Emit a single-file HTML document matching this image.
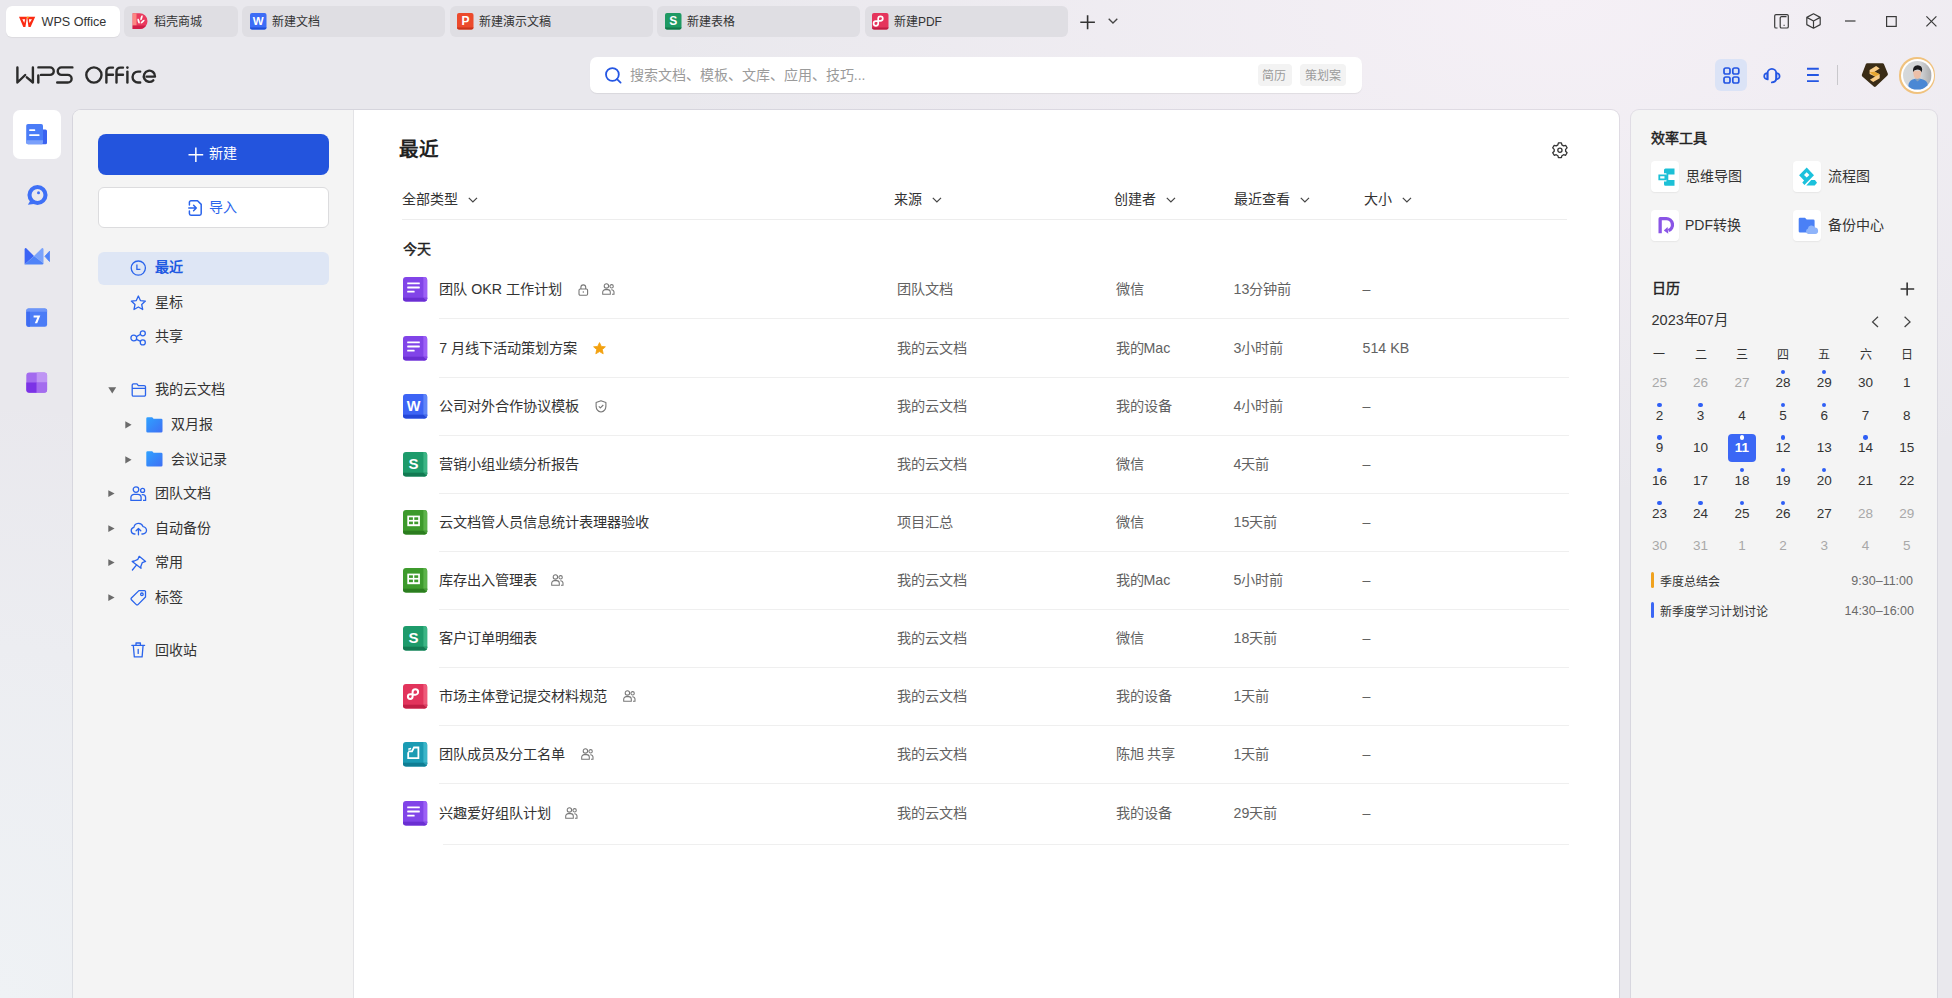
<!DOCTYPE html>
<html lang="zh-CN">
<head>
<meta charset="utf-8">
<style>
*{box-sizing:border-box;margin:0;padding:0}
html,body{width:1952px;height:998px;overflow:hidden}
body{position:relative;font-family:"Liberation Sans",sans-serif;color:#333;background:radial-gradient(ellipse 900px 500px at 1550px 0px,rgba(245,240,246,1) 0%,rgba(245,240,246,0) 100%),radial-gradient(ellipse 500px 600px at 0px 998px,rgba(239,242,245,1) 0%,rgba(239,242,245,.6) 50%,rgba(239,242,245,0) 100%),#e9e8ed}
.a{position:absolute}
.t{position:absolute;white-space:nowrap;line-height:1}
svg{position:absolute;overflow:visible}
/* tabs */
.tab{position:absolute;top:6px;height:30.5px;border-radius:6px;background:#dfdee3}
.tab.on{background:#fff;box-shadow:0 0.5px 1px rgba(0,0,0,.06)}
.tab .t{top:8.5px;font-size:12px;color:#333}
/* panel */
#panel{position:absolute;left:72.5px;top:109.5px;width:1546.5px;height:1000px;border-radius:8px;background:#fff;box-shadow:0 0 0 1px rgba(0,0,40,.07),0 0 2px rgba(0,0,0,.04);overflow:hidden}
#nav{position:absolute;left:0;top:0;width:281px;height:100%;background:#f4f4f4;border-right:1px solid #e3e3e6}
#rcard{position:absolute;left:1630.5px;top:109.5px;width:306px;height:1000px;border-radius:8px;background:#f4f4f4;box-shadow:0 0 0 1px rgba(0,0,40,.07)}
</style>
</head>
<body>
<!-- TABS -->
<div class="tab on" style="left:6px;width:114px"></div>
<svg style="left:0;top:0" width="40" height="32" viewBox="0 0 40 32"><path d="M19 16.7 H27 L25.4 27.1 H23.3Z M22.3 19.2 L24.3 23 L25.1 19.2Z" fill="#fb2a12" fill-rule="evenodd"/><path d="M27.1 16.7 H35.2 L30.6 27.1 H28.5Z M28.9 19.2 L29.5 23 L32 19.2Z" fill="#fb2a12" fill-rule="evenodd"/><circle cx="27.8" cy="17.4" r=".9" fill="#f5b51c"/></svg>
<div class="t" style="left:41.5px;top:15.5px;font-size:12.6px;color:#333">WPS Office</div>

<div class="tab" style="left:124px;width:114px"></div>
<div class="tab" style="left:242px;width:203px"></div>
<div class="tab" style="left:449.5px;width:203px"></div>
<div class="tab" style="left:657px;width:203px"></div>
<div class="tab" style="left:864.5px;width:203px"></div>


<!-- tab icons & texts -->
<svg style="left:131.5px;top:12.8px" width="16.5" height="17" viewBox="0 0 16.5 17">
 <path d="M0.6 0.3 H7.6 A7.9 7.9 0 0 1 7.6 16.1 H0.6Z" fill="#ea3a5e"/>
 <rect x="0.6" y="0.3" width="3.9" height="12.3" fill="#fc8782"/>
 <path d="M0.6 12.6 H14.16 A7.9 7.9 0 0 1 7.6 16.1 H0.6Z" fill="#d21e47"/>
 <ellipse cx="6.6" cy="8.1" rx="0.95" ry="2.6" transform="rotate(-18 6.6 8.1)" fill="#fff"/>
 <ellipse cx="9.5" cy="4.7" rx="0.95" ry="2.6" transform="rotate(18 9.5 4.7)" fill="#fff"/>
 <ellipse cx="10.6" cy="8.6" rx="0.95" ry="2.6" transform="rotate(48 10.6 8.6)" fill="#fff"/>
</svg>
<div class="t" style="left:153.9px;top:16.3px;font-size:12px">稻壳商城</div>

<svg style="left:250px;top:13px" width="16.5" height="16.5" viewBox="0 0 16.5 16.5">
 <rect x="0" y="0" width="16.5" height="16.5" rx="2" fill="#3d6df6"/>
 <path d="M0 14.5 H16.5 V14.5 A2 2 0 0 1 14.5 16.5 H2 A2 2 0 0 1 0 14.5Z" fill="#1f4fd8"/>
 <text x="8.25" y="12" font-family="Liberation Sans" font-weight="bold" font-size="11.5" fill="#fff" text-anchor="middle">W</text>
</svg>
<div class="t" style="left:271.8px;top:16.3px;font-size:12px">新建文档</div>

<svg style="left:457.3px;top:13px" width="16.5" height="16.5" viewBox="0 0 16.5 16.5">
 <rect x="0" y="0" width="16.5" height="16.5" rx="2" fill="#ec4a2c"/>
 <path d="M0 14.5 H16.5 A2 2 0 0 1 14.5 16.5 H2 A2 2 0 0 1 0 14.5Z" fill="#c9331a"/>
 <text x="8.4" y="12.2" font-family="Liberation Sans" font-weight="bold" font-size="12" fill="#fff" text-anchor="middle">P</text>
</svg>
<div class="t" style="left:479.3px;top:16.3px;font-size:12px">新建演示文稿</div>

<svg style="left:664.8px;top:12.8px" width="16.5" height="16.5" viewBox="0 0 16.5 16.5">
 <rect x="0" y="0" width="16.5" height="16.5" rx="2" fill="#1f9a64"/>
 <path d="M0 14.5 H16.5 A2 2 0 0 1 14.5 16.5 H2 A2 2 0 0 1 0 14.5Z" fill="#13784a"/>
 <text x="8.25" y="12.2" font-family="Liberation Sans" font-weight="bold" font-size="12" fill="#fff" text-anchor="middle">S</text>
</svg>
<div class="t" style="left:686.6px;top:16.3px;font-size:12px">新建表格</div>

<svg style="left:872px;top:12.8px" width="16.5" height="16.5" viewBox="0 0 16.5 16.5">
 <rect x="0" y="0" width="16.5" height="16.5" rx="2" fill="#e5345c"/>
 <path d="M0 14.5 H16.5 A2 2 0 0 1 14.5 16.5 H2 A2 2 0 0 1 0 14.5Z" fill="#c01c42"/>
 <path d="M6.2 8.2 V5.6 A2.3 2.3 0 1 1 8.5 7.9 H6.2 M6.2 8.2 H3.9 A2.3 2.3 0 1 0 6.2 10.5 Z" fill="none" stroke="#fff" stroke-width="1.7"/>
</svg>
<div class="t" style="left:893.9px;top:16.3px;font-size:12px">新建PDF</div>

<!-- plus / chevron -->
<svg style="left:1080px;top:14.6px" width="15" height="15" viewBox="0 0 15 15"><path d="M7.6 0.2 V14.2 M0.3 7.2 H14.9" stroke="#333" stroke-width="1.6"/></svg>
<svg style="left:1107.5px;top:18px" width="10" height="6" viewBox="0 0 10 6"><path d="M0.7 0.7 L5 5 L9.3 0.7" fill="none" stroke="#444" stroke-width="1.3"/></svg>

<!-- window controls -->
<svg style="left:1774px;top:14px" width="15" height="15" viewBox="0 0 15 15">
 <path d="M3.5 14 H2 A1.3 1.3 0 0 1 0.7 12.7 V1.8 A1.3 1.3 0 0 1 2 0.6 H13 A1.3 1.3 0 0 1 14.3 1.8 V12.7 A1.3 1.3 0 0 1 13 14 H7.5 A1.3 1.3 0 0 1 6.2 12.7 V4 A1.3 1.3 0 0 1 7.5 2.7 H12.5" fill="none" stroke="#3a3a3a" stroke-width="1.2"/>
 <path d="M9.6 11.4 H10.6" stroke="#3a3a3a" stroke-width="1.1"/>
</svg>
<svg style="left:1806.3px;top:13.2px" width="15" height="16" viewBox="0 0 15 16">
 <path d="M7.5 0.8 L14.2 4.4 V11.6 L7.5 15.2 L0.8 11.6 V4.4 Z M0.8 4.4 L7.5 8 L14.2 4.4 M7.5 8 V15.2" fill="none" stroke="#3a3a3a" stroke-width="1.2" stroke-linejoin="round"/>
</svg>
<svg style="left:1845px;top:20px" width="11" height="2" viewBox="0 0 11 2"><path d="M0 1 H10.5" stroke="#3a3a3a" stroke-width="1.2"/></svg>
<svg style="left:1885.5px;top:15.8px" width="11" height="11" viewBox="0 0 11 11"><rect x="0.6" y="0.6" width="9.6" height="9.8" fill="none" stroke="#3a3a3a" stroke-width="1.2"/></svg>
<svg style="left:1926.4px;top:16px" width="11" height="11" viewBox="0 0 11 11"><path d="M0.4 0.4 L10.4 10.4 M10.4 0.4 L0.4 10.4" stroke="#3a3a3a" stroke-width="1.2"/></svg>

<!-- LOGO -->
<svg style="left:0;top:0" width="170" height="100" viewBox="0 0 170 100">
 <g fill="none" stroke="#2b2b2b" stroke-width="2.4" stroke-linecap="round" stroke-linejoin="round">
  <path d="M17.4 67.4 V82.5 L25.2 75"/>
  <path d="M26.8 77.3 L32.9 82.5 V67.4"/>
  <path d="M38.3 82.5 V75.4"/>
  <path d="M38.4 67.4 H50 A3.75 3.75 0 0 1 50 74.9 H41"/>
  <path d="M72.4 67.4 H61.5 A3.75 3.75 0 0 0 61.5 74.9 H67.8 A3.8 3.8 0 0 1 67.8 82.5 H57.2"/>
  <circle cx="93.9" cy="75" r="7.6"/>
  <path d="M106.4 82.5 V71.4 A3.8 3.8 0 0 1 110.2 67.6 H113 M106.4 74.8 H113"/>
  <path d="M116.5 82.5 V71.4 A3.8 3.8 0 0 1 120.3 67.6 H123 M116.5 74.8 H123"/>
  <path d="M127.4 82.5 V71.6"/>
  <path d="M140.2 71.6 H138 A5.45 5.45 0 0 0 138 82.5 H140.2"/>
  <path d="M146.6 76.6 H155 A5.6 5.6 0 1 0 153.3 80.3"/>
 </g>
 <circle cx="127.4" cy="67.6" r="1.3" fill="#2b2b2b"/>
</svg>

<!-- SEARCH -->
<div class="a" style="left:589.8px;top:57px;width:772.4px;height:36.4px;border-radius:7px;background:#fff;box-shadow:0 1px 1px rgba(0,0,0,.07)"></div>
<svg style="left:605px;top:66.5px" width="17" height="17" viewBox="0 0 17 17"><circle cx="7.4" cy="7.5" r="6.4" fill="none" stroke="#2456e3" stroke-width="1.8"/><path d="M12 12.2 L15.6 15.6" stroke="#2456e3" stroke-width="1.8" stroke-linecap="round"/></svg>
<div class="t" style="left:629.8px;top:67.6px;font-size:14px;color:#9b9b9b">搜索文档、模板、文库、应用、技巧...</div>
<div class="a" style="left:1258px;top:64.3px;width:33.6px;height:21.6px;border-radius:4px;background:#f3f3f3"></div>
<div class="a" style="left:1300.3px;top:64.3px;width:45.5px;height:21.6px;border-radius:4px;background:#f3f3f3"></div>
<div class="t" style="left:1262.2px;top:69.5px;font-size:12px;color:#9b9b9b">简历</div>
<div class="t" style="left:1304.6px;top:69.5px;font-size:12px;color:#9b9b9b">策划案</div>

<!-- header right icons -->
<div class="a" style="left:1715.2px;top:59px;width:32px;height:32px;border-radius:6px;background:#dbe3f6"></div>
<svg style="left:1722px;top:66px" width="19" height="19" viewBox="0 0 19 19" fill="none" stroke="#2456e3" stroke-width="1.7">
 <rect x="2" y="2" width="6" height="6" rx="1.8"/><rect x="10.8" y="2" width="6" height="6" rx="1.8"/>
 <rect x="2" y="11" width="6" height="6" rx="1.8"/><rect x="10.8" y="11" width="6" height="6" rx="1.8"/>
</svg>
<svg style="left:1762px;top:67px" width="20" height="18" viewBox="0 0 20 18" fill="none" stroke="#2456e3" stroke-width="1.75" stroke-linecap="round">
 <path d="M5.5 12.2 V6.3 A4.4 4.4 0 0 1 14.3 6.3 V12.2"/>
 <path d="M5.5 6 A3.3 3.15 0 0 0 5.5 12.3Z"/>
 <path d="M14.3 6 A3.3 3.15 0 0 1 14.3 12.3Z"/>
 <path d="M14.3 12.3 Q13.6 15.3 9.8 15.4"/>
</svg>
<svg style="left:1806px;top:67px" width="14" height="16" viewBox="0 0 14 16"><path d="M1 1.8 H12.8 M1 8 H12.8 M1 14.1 H12.8" stroke="#2456e3" stroke-width="1.9"/></svg>
<div class="a" style="left:1837px;top:65.2px;width:1px;height:19.7px;background:#c9c8cc"></div>
<svg style="left:1858px;top:60px" width="34" height="30" viewBox="0 0 34 30">
 <path d="M9.2 3.15 H24.6 Q25.5 3.15 25.9 4 L29.8 13.6 Q30.2 14.6 29.4 15.4 L17.8 26.6 Q16.8 27.5 15.8 26.6 L4.3 16.4 Q3.5 15.6 3.9 14.6 L7.9 4 Q8.3 3.15 9.2 3.15Z" fill="#3a2c16"/>
 <path d="M11.6 10 L18.1 6.1 L21.7 8.5 L16.6 11.7 L21.7 14.3 V18.3 L15.2 22 L11.9 19.8 L17.1 16.6 L11.6 13.9Z" fill="#f8cc88"/>
 <path d="M11.6 12.2 L16.6 11.7 L21.7 14.3 L17.1 16.6Z" fill="#e6a630"/>
</svg>
<div class="a" style="left:1899px;top:57.3px;width:36.4px;height:36.4px;border-radius:50%;background:#f0c27e"></div>
<div class="a" style="left:1900.6px;top:58.9px;width:33.2px;height:33.2px;border-radius:50%;background:#fff"></div>
<svg style="left:1902.9px;top:61.2px" width="28.6" height="28.6" viewBox="0 0 28.6 28.6">
 <defs><clipPath id="av"><circle cx="14.3" cy="14.3" r="14.3"/></clipPath>
 <linearGradient id="avbg" x1="0" y1="0" x2="1" y2="0"><stop offset="0" stop-color="#d6d9db"/><stop offset=".6" stop-color="#d2d4d6"/><stop offset="1" stop-color="#a9abad"/></linearGradient></defs>
 <g clip-path="url(#av)">
  <rect width="28.6" height="28.6" fill="url(#avbg)"/>
  <path d="M5 29 L5.6 23 Q7 18.6 11.5 18 L14.6 17.6 L18.5 18 Q23.5 19 24.5 22.5 L25 29Z" fill="#4b88d4"/>
  <path d="M11.6 17.8 L14.5 20.4 L17.6 17.8 Z" fill="#8aa3bd"/>
  <path d="M10.2 9.8 Q10.2 17.8 14.3 18 Q18.4 17.8 18.3 9.8Z" fill="#ecbfa8"/>
  <path d="M10 11 Q9.4 4.3 14.8 4.2 Q19.2 4.6 19.2 8.6 L18.6 11.4 Q17.6 8.6 14.4 8.6 Q11 8.8 10 11Z" fill="#1b1b1d"/>
 </g>
</svg>
<!-- LEFT RAIL -->
<div class="a" style="left:12.6px;top:110px;width:48px;height:48.7px;border-radius:7px;background:#fff"></div>
<svg style="left:26px;top:124px" width="21" height="21" viewBox="0 0 21 21">
 <rect x="14" y="5.5" width="7" height="14.7" rx="1.5" fill="#3b63f0"/>
 <rect x="0.2" y="0" width="16.8" height="20.2" rx="1.8" fill="#4a7cf7"/>
 <path d="M0.2 16.3 H17 V18.4 A1.8 1.8 0 0 1 15.2 20.2 H2 A1.8 1.8 0 0 1 0.2 18.4Z" fill="#7aa0fb"/>
 <rect x="3.2" y="5.2" width="6" height="1.8" rx=".5" fill="#fff"/>
 <rect x="3.2" y="10.2" width="10.3" height="1.8" rx=".5" fill="#fff"/>
</svg>
<svg style="left:26.5px;top:183.6px" width="22" height="22" viewBox="0 0 22 22">
 <circle cx="10.5" cy="11" r="8" fill="none" stroke="#3f70f6" stroke-width="4.1"/>
 <path d="M0.9 20.7 L4.2 15 L8.8 19.7Z" fill="#3f70f6"/>
 <circle cx="11.5" cy="8.7" r="1.5" fill="#3f70f6"/>
</svg>
<svg style="left:23.5px;top:247px" width="27" height="19" viewBox="0 0 27 19">
 <path d="M2 1 L10 9 L0.6 17.6 V2.4 Q0.6 1 2 1Z" fill="#3b64f5"/>
 <path d="M18.1 1 Q19.5 1 19.5 2.4 V16.2 L10 9Z" fill="#7ba3fb"/>
 <path d="M0.6 17.6 L10 9 L19.5 16.2 Q19.5 17.6 18.1 17.6Z" fill="#4f83f8"/>
 <path d="M20.9 9.3 L25.5 4.2 V14.5Z" fill="#4f83f8" stroke="#4f83f8" stroke-width=".8" stroke-linejoin="round"/>
</svg>
<svg style="left:26px;top:307.6px" width="21.5" height="19" viewBox="0 0 21.5 19">
 <rect x="0.3" y="0.4" width="20.8" height="18.3" rx="2.2" fill="#4b7cf6"/>
 <path d="M0.3 3.8 V2.6 A2.2 2.2 0 0 1 2.5 0.4 H18.9 A2.2 2.2 0 0 1 21.1 2.6 V3.8Z" fill="#6d95f9"/>
 <path d="M0.3 3.8 H4 V18.7 H2.5 A2.2 2.2 0 0 1 0.3 16.5Z" fill="#3e6cf2"/>
 <path d="M7.6 7.4 H14.3 L11.2 15.2 H8.8 L11.3 9.4 H7.6Z" fill="#fff"/>
</svg>
<svg style="left:26px;top:371.6px" width="21.5" height="21" viewBox="0 0 21.5 21">
 <defs><clipPath id="apc"><rect x="0.3" y="0.4" width="20.8" height="20.3" rx="3"/></clipPath></defs>
 <g clip-path="url(#apc)">
  <rect x="0" y="0" width="22" height="22" fill="#a36bef"/>
  <rect x="10.7" y="0" width="11" height="10.5" fill="#bf95f4"/>
  <rect x="0" y="10.5" width="10.7" height="11" fill="#7c33e6"/>
  <rect x="10.7" y="10.5" width="11" height="11" fill="#a46cee"/>
 </g>
</svg>

<!-- PANEL -->
<div id="panel"><div id="nav"></div></div>
<div id="rcard"></div>

<!-- NAV CONTENT -->
<div class="a" style="left:97.7px;top:134px;width:231.5px;height:41px;border-radius:8px;background:#2354dd"></div>
<svg style="left:187.5px;top:147px" width="16" height="16" viewBox="0 0 16 16"><path d="M7.85 0.4 V15.1 M0.5 7.75 H15.2" stroke="#fff" stroke-width="1.5"/></svg>
<div class="t" style="left:209px;top:146.4px;font-size:14px;color:#fff">新建</div>
<div class="a" style="left:97.8px;top:187px;width:231.4px;height:40.6px;border-radius:6px;background:#fff;border:1px solid #dcdcde"></div>
<svg style="left:188px;top:199.5px" width="15" height="16" viewBox="0 0 15 16" fill="none" stroke="#2a64ec" stroke-width="1.5" stroke-linecap="round" stroke-linejoin="round">
 <path d="M1.4 5 V2.3 A1.6 1.6 0 0 1 3 0.7 H9.5 L13.2 4.4 V13.6 A1.6 1.6 0 0 1 11.6 15.2 H3 A1.6 1.6 0 0 1 1.4 13.6 V11"/>
 <path d="M0.8 8 H8.3 M5.6 5.3 L8.3 8 L5.6 10.7"/>
</svg>
<div class="t" style="left:209px;top:199.5px;font-size:14px;color:#2a64ec">导入</div>

<div class="a" style="left:97.9px;top:252px;width:231.3px;height:32.7px;border-radius:6px;background:#dee6f5"></div>
<svg style="left:130px;top:260px" width="17" height="17" viewBox="0 0 17 17" fill="none" stroke="#2a64ec" stroke-width="1.3">
 <circle cx="8.3" cy="8.1" r="7.1"/><path d="M6.9 4.6 V9.3 H10.4"/>
</svg>
<div class="t" style="left:154.8px;top:260.4px;font-size:14px;font-weight:bold;color:#1f5ae2">最近</div>
<svg style="left:130px;top:295px" width="17" height="16" viewBox="0 0 17 16" fill="none" stroke="#2a64ec" stroke-width="1.3" stroke-linejoin="round">
 <path d="M8.35 1 L10.4 5.6 L15.4 6.1 L11.7 9.5 L12.7 14.5 L8.35 12 L4 14.5 L5 9.5 L1.3 6.1 L6.3 5.6Z"/>
</svg>
<div class="t" style="left:154.8px;top:294.8px;font-size:14px">星标</div>
<svg style="left:130px;top:329.5px" width="17" height="16" viewBox="0 0 17 16" fill="none" stroke="#2a64ec" stroke-width="1.3">
 <circle cx="3.8" cy="8" r="2.9"/><circle cx="12.8" cy="3.3" r="2.5"/><circle cx="12.8" cy="12.4" r="2.5"/>
 <path d="M6.4 6.6 L10.6 4.3 M6.4 9.4 L10.6 11.4"/>
</svg>
<div class="t" style="left:154.8px;top:329.4px;font-size:14px">共享</div>

<svg style="left:107.5px;top:386.5px" width="9" height="7" viewBox="0 0 9 7"><path d="M0.3 0.3 H8.2 L4.25 6.6Z" fill="#6b6b6b"/></svg>
<svg style="left:130.5px;top:382.8px" width="16" height="14" viewBox="0 0 16 14" fill="none" stroke="#2a64ec" stroke-width="1.3" stroke-linejoin="round">
 <path d="M1.2 2.2 A1.3 1.3 0 0 1 2.5 0.9 H6 L7.3 2.6 H13.2 A1.3 1.3 0 0 1 14.5 3.9 V11.9 A1.3 1.3 0 0 1 13.2 13.2 H2.5 A1.3 1.3 0 0 1 1.2 11.9Z M1.2 5.3 H14.5"/>
</svg>
<div class="t" style="left:154.5px;top:382.4px;font-size:14.2px">我的云文档</div>

<svg style="left:124.7px;top:421.2px" width="7" height="8" viewBox="0 0 7 8"><path d="M0.3 0.3 L6.6 3.85 L0.3 7.4Z" fill="#6b6b6b"/></svg>
<svg style="left:146px;top:416.5px" width="17" height="16" viewBox="0 0 17 16">
 <defs><linearGradient id="fg" x1="0" y1="0" x2="1" y2="1"><stop offset="0" stop-color="#2ea2ff"/><stop offset="1" stop-color="#3f6ff4"/></linearGradient></defs>
 <path d="M0.3 1.6 A1.3 1.3 0 0 1 1.6 0.3 H6.2 L7.6 1.7 H15.2 A1.3 1.3 0 0 1 16.5 3 V14.2 A1.3 1.3 0 0 1 15.2 15.5 H1.6 A1.3 1.3 0 0 1 0.3 14.2Z" fill="url(#fg)"/>
</svg>
<div class="t" style="left:171px;top:417px;font-size:14px">双月报</div>

<svg style="left:124.7px;top:455.5px" width="7" height="8" viewBox="0 0 7 8"><path d="M0.3 0.3 L6.6 3.85 L0.3 7.4Z" fill="#6b6b6b"/></svg>
<svg style="left:146px;top:451.2px" width="17" height="16" viewBox="0 0 17 16">
 <path d="M0.3 1.6 A1.3 1.3 0 0 1 1.6 0.3 H6.2 L7.6 1.7 H15.2 A1.3 1.3 0 0 1 16.5 3 V14.2 A1.3 1.3 0 0 1 15.2 15.5 H1.6 A1.3 1.3 0 0 1 0.3 14.2Z" fill="url(#fg)"/>
</svg>
<div class="t" style="left:171px;top:451.5px;font-size:14px">会议记录</div>

<svg style="left:108.4px;top:490.3px" width="7" height="8" viewBox="0 0 7 8"><path d="M0.3 0.3 L6.6 3.6 L0.3 6.9Z" fill="#6b6b6b"/></svg>
<svg style="left:129.8px;top:486.3px" width="17" height="16" viewBox="0 0 17 16" fill="none" stroke="#2a64ec" stroke-width="1.3" stroke-linejoin="round">
 <circle cx="6" cy="3.6" r="2.8"/><circle cx="12.6" cy="4.4" r="2"/>
 <path d="M0.9 14.4 V11.6 A3.3 3.3 0 0 1 4.2 8.3 H7.8 A3.3 3.3 0 0 1 11.1 11.6 V14.4Z"/>
 <path d="M11.7 8.6 H12.6 A3 3 0 0 1 15.6 11.6 V14.4 H13"/>
</svg>
<div class="t" style="left:154.8px;top:486.4px;font-size:14px">团队文档</div>

<svg style="left:108.4px;top:524.8px" width="7" height="8" viewBox="0 0 7 8"><path d="M0.3 0.3 L6.6 3.6 L0.3 6.9Z" fill="#6b6b6b"/></svg>
<svg style="left:129.8px;top:521.3px" width="17" height="15" viewBox="0 0 17 15" fill="none" stroke="#2a64ec" stroke-width="1.3" stroke-linecap="round" stroke-linejoin="round">
 <path d="M5 13 H4.2 A3.4 3.4 0 0 1 3.9 6.3 A4.7 4.7 0 0 1 13 5.6 A3.7 3.7 0 0 1 12.6 13 H11.9"/>
 <path d="M8.45 13.8 V7.6 M6.1 9.8 L8.45 7.5 L10.8 9.8"/>
</svg>
<div class="t" style="left:154.8px;top:520.9px;font-size:14px">自动备份</div>

<svg style="left:108.4px;top:559.3px" width="7" height="8" viewBox="0 0 7 8"><path d="M0.3 0.3 L6.6 3.6 L0.3 6.9Z" fill="#6b6b6b"/></svg>
<svg style="left:129.8px;top:555.2px" width="17" height="17" viewBox="0 0 17 17" fill="none" stroke="#2a64ec" stroke-width="1.3" stroke-linecap="round" stroke-linejoin="round">
 <path d="M9.2 1.3 L15.6 6.4 L12.3 7.6 L10.8 11.5 L11 13.3 L2.2 6.5 L4.3 6 L7.9 4.3Z"/>
 <path d="M6.6 9.8 L2.4 15"/>
</svg>
<div class="t" style="left:154.8px;top:555.4px;font-size:14px">常用</div>

<svg style="left:108.4px;top:593.8px" width="7" height="8" viewBox="0 0 7 8"><path d="M0.3 0.3 L6.6 3.6 L0.3 6.9Z" fill="#6b6b6b"/></svg>
<svg style="left:129.8px;top:589.8px" width="17" height="16" viewBox="0 0 17 16" fill="none" stroke="#2a64ec" stroke-width="1.3" stroke-linejoin="round">
 <path d="M15.5 1.6 V7 L8 14.6 A1.2 1.2 0 0 1 6.3 14.6 L1.4 9.7 A1.2 1.2 0 0 1 1.4 8 L8.9 0.6 H14.5 A1 1 0 0 1 15.5 1.6Z"/>
 <circle cx="11.9" cy="4.3" r="1.3"/>
</svg>
<div class="t" style="left:154.8px;top:589.9px;font-size:14px">标签</div>

<svg style="left:131.2px;top:642.2px" width="15" height="16" viewBox="0 0 15 16" fill="none" stroke="#2a64ec" stroke-width="1.3" stroke-linecap="round" stroke-linejoin="round">
 <path d="M0.8 3.3 H13.6 M5 3.3 V1 H9.4 V3.3 M2.3 3.3 L3.3 14.9 H11.1 L12.1 3.3 M7.2 7.3 V11.4"/>
</svg>
<div class="t" style="left:154.8px;top:642.7px;font-size:14px">回收站</div>
<!-- MAIN -->
<div class="t" style="left:399px;top:140.3px;font-size:19.5px;font-weight:bold;color:#222">最近</div>
<svg style="left:1552px;top:141.8px" width="16" height="16" viewBox="0 0 16 16" fill="none" stroke="#333" stroke-width="1.3" stroke-linejoin="round">
 <path d="M6.4 0.9 H9.4 L9.9 2.9 L11.6 3.9 L13.6 3.3 L15.1 5.9 L13.6 7.4 V9.3 L15.1 10.7 L13.6 13.3 L11.6 12.7 L9.9 13.7 L9.4 15.6 H6.4 L5.9 13.7 L4.2 12.7 L2.2 13.3 L0.7 10.7 L2.2 9.3 V7.4 L0.7 5.9 L2.2 3.3 L4.2 3.9 L5.9 2.9Z"/>
 <circle cx="7.9" cy="8.3" r="2.1"/>
</svg>
<div class="t" style="left:401.8px;top:191.6px;font-size:14px;color:#333">全部类型</div>
<svg style="left:468.2px;top:197px" width="10" height="7" viewBox="0 0 10 7"><path d="M0.8 0.8 L4.9 5 L9 0.8" fill="none" stroke="#444" stroke-width="1.2"/></svg>
<div class="t" style="left:894.1px;top:191.6px;font-size:14px;color:#333">来源</div>
<svg style="left:932.3px;top:197px" width="10" height="7" viewBox="0 0 10 7"><path d="M0.8 0.8 L4.9 5 L9 0.8" fill="none" stroke="#444" stroke-width="1.2"/></svg>
<div class="t" style="left:1113.8px;top:191.6px;font-size:14px;color:#333">创建者</div>
<svg style="left:1166px;top:197px" width="10" height="7" viewBox="0 0 10 7"><path d="M0.8 0.8 L4.9 5 L9 0.8" fill="none" stroke="#444" stroke-width="1.2"/></svg>
<div class="t" style="left:1234px;top:191.6px;font-size:14px;color:#333">最近查看</div>
<svg style="left:1299.8px;top:197px" width="10" height="7" viewBox="0 0 10 7"><path d="M0.8 0.8 L4.9 5 L9 0.8" fill="none" stroke="#444" stroke-width="1.2"/></svg>
<div class="t" style="left:1363.8px;top:191.6px;font-size:14px;color:#333">大小</div>
<svg style="left:1402px;top:197px" width="10" height="7" viewBox="0 0 10 7"><path d="M0.8 0.8 L4.9 5 L9 0.8" fill="none" stroke="#444" stroke-width="1.2"/></svg>
<div class="a" style="left:402px;top:218.6px;width:1165px;height:1px;background:#ededed"></div>
<div class="t" style="left:402.6px;top:242.2px;font-size:14px;-webkit-text-stroke:.45px #222;color:#222">今天</div>
<svg style="left:402.6px;top:277.4px" width="25" height="25" viewBox="0 0 25 25">
 <defs><clipPath id="c277"><rect x="0" y="0" width="24.2" height="24.5" rx="3"/></clipPath></defs>
 <g clip-path="url(#c277)"><rect width="25" height="25" fill="#8144e8"/><rect x="20.4" y="0" width="5" height="25" fill="#9c60f6"/><rect x="0" y="20.7" width="25" height="5" fill="#6a2fd2"/><path d="M20.4 20.7 H25 V25 Z" fill="#9c60f6" opacity=".6"/></g><rect x="4.2" y="5.4" width="12.6" height="1.9" rx=".4" fill="#fff"/><rect x="4.2" y="9.5" width="12.6" height="1.9" rx=".4" fill="#fff"/><rect x="4.2" y="13.7" width="7.4" height="1.9" rx=".4" fill="#fff"/></svg>
<div class="t" style="left:439.2px;top:282.16px;font-size:14.2px;color:#333">团队 OKR 工作计划</div>
<div class="t" style="left:896.7px;top:282.16px;font-size:14.2px;color:#626262">团队文档</div>
<div class="t" style="left:1115.5px;top:282.16px;font-size:14.2px;color:#626262">微信</div>
<div class="t" style="left:1233.5px;top:282.16px;font-size:14.2px;color:#626262">13分钟前</div>
<div class="t" style="left:1362.6px;top:282.16px;font-size:14.2px;color:#626262">–</div>
<div class="a" style="left:439px;top:318.1px;width:1130px;height:1px;background:#efefef"></div>
<svg style="left:577.9px;top:283.5px" width="11" height="12" viewBox="0 0 11 12" fill="none" stroke="#777" stroke-width="1.1"><rect x="1" y="5" width="8.6" height="6.2" rx="1.2"/><path d="M2.9 5 V3.3 A2.4 2.4 0 0 1 7.7 3.3 V5 M5.3 7.3 V8.8"/></svg>
<svg style="left:601.5px;top:283.3px" width="13" height="12" viewBox="0 0 13 12" fill="none" stroke="#777" stroke-width="1.05"><circle cx="4.4" cy="2.9" r="2.2"/><circle cx="9.6" cy="3.3" r="1.7"/><path d="M0.7 11.2 V9.3 A2.7 2.7 0 0 1 3.4 6.6 H5.6 A2.7 2.7 0 0 1 8.3 9.3 V11.2Z M9.3 6.7 A2.4 2.4 0 0 1 12 9.1 V11.2 H10"/></svg>
<svg style="left:402.6px;top:336.4px" width="25" height="25" viewBox="0 0 25 25">
 <defs><clipPath id="c336"><rect x="0" y="0" width="24.2" height="24.5" rx="3"/></clipPath></defs>
 <g clip-path="url(#c336)"><rect width="25" height="25" fill="#8144e8"/><rect x="20.4" y="0" width="5" height="25" fill="#9c60f6"/><rect x="0" y="20.7" width="25" height="5" fill="#6a2fd2"/><path d="M20.4 20.7 H25 V25 Z" fill="#9c60f6" opacity=".6"/></g><rect x="4.2" y="5.4" width="12.6" height="1.9" rx=".4" fill="#fff"/><rect x="4.2" y="9.5" width="12.6" height="1.9" rx=".4" fill="#fff"/><rect x="4.2" y="13.7" width="7.4" height="1.9" rx=".4" fill="#fff"/></svg>
<div class="t" style="left:439.2px;top:341.16px;font-size:14.2px;color:#333">7 月线下活动策划方案</div>
<div class="t" style="left:896.7px;top:341.16px;font-size:14.2px;color:#626262">我的云文档</div>
<div class="t" style="left:1115.5px;top:341.16px;font-size:14.2px;color:#626262">我的Mac</div>
<div class="t" style="left:1233.5px;top:341.16px;font-size:14.2px;color:#626262">3小时前</div>
<div class="t" style="left:1362.6px;top:341.16px;font-size:14.2px;color:#626262">514 KB</div>
<div class="a" style="left:439px;top:377.1px;width:1130px;height:1px;background:#efefef"></div>
<svg style="left:592.6px;top:341.6px" width="13" height="13" viewBox="0 0 13 13"><path d="M6.5 0.6 L8.3 4.4 L12.4 4.8 L9.3 7.6 L10.2 11.8 L6.5 9.6 L2.8 11.8 L3.7 7.6 L0.6 4.8 L4.7 4.4Z" fill="#f3a10f" stroke="#f3a10f" stroke-width=".8" stroke-linejoin="round"/></svg>
<svg style="left:402.6px;top:394.2px" width="25" height="25" viewBox="0 0 25 25">
 <defs><clipPath id="c394"><rect x="0" y="0" width="24.2" height="24.5" rx="3"/></clipPath></defs>
 <g clip-path="url(#c394)"><rect width="25" height="25" fill="#3d64f5"/><rect x="20.4" y="0" width="5" height="25" fill="#5f85f8"/><rect x="0" y="20.7" width="25" height="5" fill="#2447d8"/><path d="M20.4 20.7 H25 V25 Z" fill="#5f85f8" opacity=".6"/></g><text x="10.6" y="16.6" font-family="Liberation Sans" font-weight="bold" font-size="14.5" fill="#fff" text-anchor="middle">W</text></svg>
<div class="t" style="left:439.2px;top:398.96px;font-size:14.2px;color:#333">公司对外合作协议模板</div>
<div class="t" style="left:896.7px;top:398.96px;font-size:14.2px;color:#626262">我的云文档</div>
<div class="t" style="left:1115.5px;top:398.96px;font-size:14.2px;color:#626262">我的设备</div>
<div class="t" style="left:1233.5px;top:398.96px;font-size:14.2px;color:#626262">4小时前</div>
<div class="t" style="left:1362.6px;top:398.96px;font-size:14.2px;color:#626262">–</div>
<div class="a" style="left:439px;top:434.9px;width:1130px;height:1px;background:#efefef"></div>
<svg style="left:595px;top:399.9px" width="12" height="13" viewBox="0 0 12 13" fill="none" stroke="#777" stroke-width="1.1" stroke-linejoin="round"><path d="M6 0.8 L10.9 2.6 V6.4 A6 6 0 0 1 6 12 A6 6 0 0 1 1.1 6.4 V2.6Z"/><path d="M3.8 6.3 L5.4 7.9 L8.3 5"/></svg>
<svg style="left:402.6px;top:452.1px" width="25" height="25" viewBox="0 0 25 25">
 <defs><clipPath id="c452"><rect x="0" y="0" width="24.2" height="24.5" rx="3"/></clipPath></defs>
 <g clip-path="url(#c452)"><rect width="25" height="25" fill="#1d9b6b"/><rect x="20.4" y="0" width="5" height="25" fill="#3cb585"/><rect x="0" y="20.7" width="25" height="5" fill="#127a52"/><path d="M20.4 20.7 H25 V25 Z" fill="#3cb585" opacity=".6"/></g><text x="10.6" y="16.8" font-family="Liberation Sans" font-weight="bold" font-size="15" fill="#fff" text-anchor="middle">S</text></svg>
<div class="t" style="left:439.2px;top:456.86px;font-size:14.2px;color:#333">营销小组业绩分析报告</div>
<div class="t" style="left:896.7px;top:456.86px;font-size:14.2px;color:#626262">我的云文档</div>
<div class="t" style="left:1115.5px;top:456.86px;font-size:14.2px;color:#626262">微信</div>
<div class="t" style="left:1233.5px;top:456.86px;font-size:14.2px;color:#626262">4天前</div>
<div class="t" style="left:1362.6px;top:456.86px;font-size:14.2px;color:#626262">–</div>
<div class="a" style="left:439px;top:492.8px;width:1130px;height:1px;background:#efefef"></div>
<svg style="left:402.6px;top:510.0px" width="25" height="25" viewBox="0 0 25 25">
 <defs><clipPath id="c510"><rect x="0" y="0" width="24.2" height="24.5" rx="3"/></clipPath></defs>
 <g clip-path="url(#c510)"><rect width="25" height="25" fill="#3d9a2c"/><rect x="20.4" y="0" width="5" height="25" fill="#5cb24a"/><rect x="0" y="20.7" width="25" height="5" fill="#2b7d1f"/><path d="M20.4 20.7 H25 V25 Z" fill="#5cb24a" opacity=".6"/></g><rect x="4.3" y="5.6" width="12.6" height="10.6" fill="#fff"/><rect x="6" y="7.3" width="3.9" height="2.6" fill="#3d9a2c"/><rect x="11.3" y="7.3" width="3.9" height="2.6" fill="#3d9a2c"/><rect x="6" y="11.6" width="3.9" height="2.6" fill="#3d9a2c"/><rect x="11.3" y="11.6" width="3.9" height="2.6" fill="#3d9a2c"/></svg>
<div class="t" style="left:439.2px;top:514.76px;font-size:14.2px;color:#333">云文档管人员信息统计表理器验收</div>
<div class="t" style="left:896.7px;top:514.76px;font-size:14.2px;color:#626262">项目汇总</div>
<div class="t" style="left:1115.5px;top:514.76px;font-size:14.2px;color:#626262">微信</div>
<div class="t" style="left:1233.5px;top:514.76px;font-size:14.2px;color:#626262">15天前</div>
<div class="t" style="left:1362.6px;top:514.76px;font-size:14.2px;color:#626262">–</div>
<div class="a" style="left:439px;top:550.7px;width:1130px;height:1px;background:#efefef"></div>
<svg style="left:402.6px;top:568.0px" width="25" height="25" viewBox="0 0 25 25">
 <defs><clipPath id="c568"><rect x="0" y="0" width="24.2" height="24.5" rx="3"/></clipPath></defs>
 <g clip-path="url(#c568)"><rect width="25" height="25" fill="#3d9a2c"/><rect x="20.4" y="0" width="5" height="25" fill="#5cb24a"/><rect x="0" y="20.7" width="25" height="5" fill="#2b7d1f"/><path d="M20.4 20.7 H25 V25 Z" fill="#5cb24a" opacity=".6"/></g><rect x="4.3" y="5.6" width="12.6" height="10.6" fill="#fff"/><rect x="6" y="7.3" width="3.9" height="2.6" fill="#3d9a2c"/><rect x="11.3" y="7.3" width="3.9" height="2.6" fill="#3d9a2c"/><rect x="6" y="11.6" width="3.9" height="2.6" fill="#3d9a2c"/><rect x="11.3" y="11.6" width="3.9" height="2.6" fill="#3d9a2c"/></svg>
<div class="t" style="left:439.2px;top:572.76px;font-size:14.2px;color:#333">库存出入管理表</div>
<div class="t" style="left:896.7px;top:572.76px;font-size:14.2px;color:#626262">我的云文档</div>
<div class="t" style="left:1115.5px;top:572.76px;font-size:14.2px;color:#626262">我的Mac</div>
<div class="t" style="left:1233.5px;top:572.76px;font-size:14.2px;color:#626262">5小时前</div>
<div class="t" style="left:1362.6px;top:572.76px;font-size:14.2px;color:#626262">–</div>
<div class="a" style="left:439px;top:608.7px;width:1130px;height:1px;background:#efefef"></div>
<svg style="left:551.2px;top:573.9000000000001px" width="13" height="12" viewBox="0 0 13 12" fill="none" stroke="#777" stroke-width="1.05"><circle cx="4.4" cy="2.9" r="2.2"/><circle cx="9.6" cy="3.3" r="1.7"/><path d="M0.7 11.2 V9.3 A2.7 2.7 0 0 1 3.4 6.6 H5.6 A2.7 2.7 0 0 1 8.3 9.3 V11.2Z M9.3 6.7 A2.4 2.4 0 0 1 12 9.1 V11.2 H10"/></svg>
<svg style="left:402.6px;top:625.9px" width="25" height="25" viewBox="0 0 25 25">
 <defs><clipPath id="c625"><rect x="0" y="0" width="24.2" height="24.5" rx="3"/></clipPath></defs>
 <g clip-path="url(#c625)"><rect width="25" height="25" fill="#1d9b6b"/><rect x="20.4" y="0" width="5" height="25" fill="#3cb585"/><rect x="0" y="20.7" width="25" height="5" fill="#127a52"/><path d="M20.4 20.7 H25 V25 Z" fill="#3cb585" opacity=".6"/></g><text x="10.6" y="16.8" font-family="Liberation Sans" font-weight="bold" font-size="15" fill="#fff" text-anchor="middle">S</text></svg>
<div class="t" style="left:439.2px;top:630.66px;font-size:14.2px;color:#333">客户订单明细表</div>
<div class="t" style="left:896.7px;top:630.66px;font-size:14.2px;color:#626262">我的云文档</div>
<div class="t" style="left:1115.5px;top:630.66px;font-size:14.2px;color:#626262">微信</div>
<div class="t" style="left:1233.5px;top:630.66px;font-size:14.2px;color:#626262">18天前</div>
<div class="t" style="left:1362.6px;top:630.66px;font-size:14.2px;color:#626262">–</div>
<div class="a" style="left:439px;top:666.6px;width:1130px;height:1px;background:#efefef"></div>
<svg style="left:402.6px;top:683.9px" width="25" height="25" viewBox="0 0 25 25">
 <defs><clipPath id="c683"><rect x="0" y="0" width="24.2" height="24.5" rx="3"/></clipPath></defs>
 <g clip-path="url(#c683)"><rect width="25" height="25" fill="#e2345c"/><rect x="20.4" y="0" width="5" height="25" fill="#ee5a7a"/><rect x="0" y="20.7" width="25" height="5" fill="#c11f45"/><path d="M20.4 20.7 H25 V25 Z" fill="#ee5a7a" opacity=".6"/></g><path d="M9.6 12.4 V7.9 A2.75 2.75 0 1 1 12.35 10.65 H9.6 M9.6 10.3 V12.6 A2.35 2.35 0 1 1 7.25 10.25 H9.6" fill="none" stroke="#fff" stroke-width="2"/></svg>
<div class="t" style="left:439.2px;top:688.66px;font-size:14.2px;color:#333">市场主体登记提交材料规范</div>
<div class="t" style="left:896.7px;top:688.66px;font-size:14.2px;color:#626262">我的云文档</div>
<div class="t" style="left:1115.5px;top:688.66px;font-size:14.2px;color:#626262">我的设备</div>
<div class="t" style="left:1233.5px;top:688.66px;font-size:14.2px;color:#626262">1天前</div>
<div class="t" style="left:1362.6px;top:688.66px;font-size:14.2px;color:#626262">–</div>
<div class="a" style="left:439px;top:724.6px;width:1130px;height:1px;background:#efefef"></div>
<svg style="left:623px;top:689.8000000000001px" width="13" height="12" viewBox="0 0 13 12" fill="none" stroke="#777" stroke-width="1.05"><circle cx="4.4" cy="2.9" r="2.2"/><circle cx="9.6" cy="3.3" r="1.7"/><path d="M0.7 11.2 V9.3 A2.7 2.7 0 0 1 3.4 6.6 H5.6 A2.7 2.7 0 0 1 8.3 9.3 V11.2Z M9.3 6.7 A2.4 2.4 0 0 1 12 9.1 V11.2 H10"/></svg>
<svg style="left:402.6px;top:742.0px" width="25" height="25" viewBox="0 0 25 25">
 <defs><clipPath id="c742"><rect x="0" y="0" width="24.2" height="24.5" rx="3"/></clipPath></defs>
 <g clip-path="url(#c742)"><rect width="25" height="25" fill="#1a9bb3"/><rect x="20.4" y="0" width="5" height="25" fill="#3bb6c9"/><rect x="0" y="20.7" width="25" height="5" fill="#0f7d93"/><path d="M20.4 20.7 H25 V25 Z" fill="#3bb6c9" opacity=".6"/></g><path d="M5.2 10.2 V16.2 H15.4 V5.5 H11 L9 9.3 H5.2" fill="none" stroke="#fff" stroke-width="1.8" stroke-linejoin="miter"/><path d="M5.3 7.2 L8.1 6.4" stroke="#fff" stroke-width="1.6"/></svg>
<div class="t" style="left:439.2px;top:746.76px;font-size:14.2px;color:#333">团队成员及分工名单</div>
<div class="t" style="left:896.7px;top:746.76px;font-size:14.2px;color:#626262">我的云文档</div>
<div class="t" style="left:1115.5px;top:746.76px;font-size:14.2px;color:#626262">陈旭 共享</div>
<div class="t" style="left:1233.5px;top:746.76px;font-size:14.2px;color:#626262">1天前</div>
<div class="t" style="left:1362.6px;top:746.76px;font-size:14.2px;color:#626262">–</div>
<div class="a" style="left:439px;top:782.7px;width:1130px;height:1px;background:#efefef"></div>
<svg style="left:581.3px;top:747.9000000000001px" width="13" height="12" viewBox="0 0 13 12" fill="none" stroke="#777" stroke-width="1.05"><circle cx="4.4" cy="2.9" r="2.2"/><circle cx="9.6" cy="3.3" r="1.7"/><path d="M0.7 11.2 V9.3 A2.7 2.7 0 0 1 3.4 6.6 H5.6 A2.7 2.7 0 0 1 8.3 9.3 V11.2Z M9.3 6.7 A2.4 2.4 0 0 1 12 9.1 V11.2 H10"/></svg>
<svg style="left:402.6px;top:800.9px" width="25" height="25" viewBox="0 0 25 25">
 <defs><clipPath id="c800"><rect x="0" y="0" width="24.2" height="24.5" rx="3"/></clipPath></defs>
 <g clip-path="url(#c800)"><rect width="25" height="25" fill="#8144e8"/><rect x="20.4" y="0" width="5" height="25" fill="#9c60f6"/><rect x="0" y="20.7" width="25" height="5" fill="#6a2fd2"/><path d="M20.4 20.7 H25 V25 Z" fill="#9c60f6" opacity=".6"/></g><rect x="4.2" y="5.4" width="12.6" height="1.9" rx=".4" fill="#fff"/><rect x="4.2" y="9.5" width="12.6" height="1.9" rx=".4" fill="#fff"/><rect x="4.2" y="13.7" width="7.4" height="1.9" rx=".4" fill="#fff"/></svg>
<div class="t" style="left:439.2px;top:805.66px;font-size:14.2px;color:#333">兴趣爱好组队计划</div>
<div class="t" style="left:896.7px;top:805.66px;font-size:14.2px;color:#626262">我的云文档</div>
<div class="t" style="left:1115.5px;top:805.66px;font-size:14.2px;color:#626262">我的设备</div>
<div class="t" style="left:1233.5px;top:805.66px;font-size:14.2px;color:#626262">29天前</div>
<div class="t" style="left:1362.6px;top:805.66px;font-size:14.2px;color:#626262">–</div>
<div class="a" style="left:443.2px;top:843.7px;width:1125.8px;height:1px;background:#efefef"></div>
<svg style="left:565px;top:806.8000000000001px" width="13" height="12" viewBox="0 0 13 12" fill="none" stroke="#777" stroke-width="1.05"><circle cx="4.4" cy="2.9" r="2.2"/><circle cx="9.6" cy="3.3" r="1.7"/><path d="M0.7 11.2 V9.3 A2.7 2.7 0 0 1 3.4 6.6 H5.6 A2.7 2.7 0 0 1 8.3 9.3 V11.2Z M9.3 6.7 A2.4 2.4 0 0 1 12 9.1 V11.2 H10"/></svg>
<!-- RIGHT -->
<div class="t" style="left:1650.5px;top:131.2px;font-size:14px;-webkit-text-stroke:.45px #222;color:#222">效率工具</div>
<div class="a" style="left:1651px;top:160.7px;width:28.2px;height:31.6px;border-radius:4px;background:#fff;box-shadow:0 1px 1.5px rgba(0,0,0,.06)"></div>
<div class="a" style="left:1793.3px;top:160.7px;width:28.2px;height:31.6px;border-radius:4px;background:#fff;box-shadow:0 1px 1.5px rgba(0,0,0,.06)"></div>
<div class="a" style="left:1651px;top:209.9px;width:28.2px;height:31.6px;border-radius:4px;background:#fff;box-shadow:0 1px 1.5px rgba(0,0,0,.06)"></div>
<div class="a" style="left:1793.3px;top:209.9px;width:28.2px;height:31.6px;border-radius:4px;background:#fff;box-shadow:0 1px 1.5px rgba(0,0,0,.06)"></div>
<svg style="left:1655.5px;top:167px" width="20" height="20" viewBox="0 0 20 20">
 <path d="M2.4 7.6 H10.4 V13.2 H2.4Z M4.2 9.3 V11.5 H8.6 V9.3Z" fill="#1cc0d6" fill-rule="evenodd"/>
 <path d="M9.5 1.4 H18.5 V7.4 H12.3 V13 H18.5 V18.7 H9.5 A1.5 1.5 0 0 1 8 17.2 V14.5 H10.4 V12.5 H8.8 V8.3 H10.4 V6.2 H8 V2.9 A1.5 1.5 0 0 1 9.5 1.4Z" fill="#1cc0d6"/>
</svg>
<div class="t" style="left:1685.6px;top:169px;font-size:14px;color:#333">思维导图</div>
<svg style="left:1798px;top:166px" width="21" height="21" viewBox="0 0 21 21">
 <path d="M8.7 1.6 L16 9.2 L6.4 18.9 L4.3 16.6 L6.1 14.4 L1.1 9.2Z M8.7 6.2 L6 8.9 L8.7 11.6 L11.4 8.9Z" fill="#1cc1dc" fill-rule="evenodd"/>
 <path d="M13.2 14 H16.9 L19 16.75 L16.7 19.5 H8.3Z" fill="#1cc1dc"/>
</svg>
<div class="t" style="left:1828px;top:169px;font-size:14px;color:#333">流程图</div>
<svg style="left:1657px;top:216px" width="18" height="19" viewBox="0 0 18 19">
 <path d="M3.15 17.2 V2.65 H9.2 A6.1 6.1 0 0 1 11.4 14.5" fill="none" stroke="#8a55e6" stroke-width="3.3" stroke-linejoin="round"/>
 <path d="M6.8 14.4 L10.6 10.9 L11.3 17.7Z" fill="#8a55e6"/>
</svg>
<div class="t" style="left:1685px;top:217.6px;font-size:14px;color:#333">PDF转换</div>
<svg style="left:1797.5px;top:217px" width="21" height="18" viewBox="0 0 21 18">
 <path d="M0.7 2 A1.3 1.3 0 0 1 2 0.7 H7 L8.7 2.5 H15.3 A1.3 1.3 0 0 1 16.6 3.8 V14.3 A1.3 1.3 0 0 1 15.3 15.6 H2 A1.3 1.3 0 0 1 0.7 14.3Z" fill="#4a80f6"/>
 <path d="M10.3 16.9 A2.7 2.7 0 0 1 9.8 11.7 A3.6 3.6 0 0 1 16.6 10.5 A2.9 2.9 0 0 1 17.2 16.9Z" fill="#8fb4fa"/>
</svg>
<div class="t" style="left:1828px;top:217.6px;font-size:14px;color:#333">备份中心</div>
<div class="t" style="left:1652px;top:280.6px;font-size:14px;-webkit-text-stroke:.45px #222;color:#222">日历</div>
<svg style="left:1899.5px;top:281.8px" width="15" height="14" viewBox="0 0 15 14"><path d="M7.15 0.5 V13.6 M0.6 7.05 H14.2" stroke="#333" stroke-width="1.6"/></svg>
<div class="t" style="left:1651.5px;top:313.4px;font-size:14.5px;color:#333">2023年07月</div>
<svg style="left:1870.5px;top:315.5px" width="9" height="12" viewBox="0 0 9 12"><path d="M7 0.8 L1.6 5.9 L7 11" fill="none" stroke="#444" stroke-width="1.3"/></svg>
<svg style="left:1903px;top:315.5px" width="9" height="12" viewBox="0 0 9 12"><path d="M1.6 0.8 L7 5.9 L1.6 11" fill="none" stroke="#444" stroke-width="1.3"/></svg>
<div class="t" style="left:1629.4px;width:60px;text-align:center;top:349px;font-size:12px;color:#333">一</div>
<div class="t" style="left:1670.6px;width:60px;text-align:center;top:349px;font-size:12px;color:#333">二</div>
<div class="t" style="left:1711.9px;width:60px;text-align:center;top:349px;font-size:12px;color:#333">三</div>
<div class="t" style="left:1753.1px;width:60px;text-align:center;top:349px;font-size:12px;color:#333">四</div>
<div class="t" style="left:1794.3px;width:60px;text-align:center;top:349px;font-size:12px;color:#333">五</div>
<div class="t" style="left:1835.6px;width:60px;text-align:center;top:349px;font-size:12px;color:#333">六</div>
<div class="t" style="left:1876.8px;width:60px;text-align:center;top:349px;font-size:12px;color:#333">日</div>
<div class="t" style="left:1629.4px;width:60px;text-align:center;top:376.15px;font-size:13.5px;font-weight:normal;color:#a8a8a8">25</div>
<div class="t" style="left:1670.6px;width:60px;text-align:center;top:376.15px;font-size:13.5px;font-weight:normal;color:#a8a8a8">26</div>
<div class="t" style="left:1711.9px;width:60px;text-align:center;top:376.15px;font-size:13.5px;font-weight:normal;color:#a8a8a8">27</div>
<div class="t" style="left:1753.1px;width:60px;text-align:center;top:376.15px;font-size:13.5px;font-weight:normal;color:#333">28</div>
<div class="a" style="left:1780.9499999999998px;top:370.10px;width:4.3px;height:4.3px;border-radius:50%;background:#2f5ff5"></div>
<div class="t" style="left:1794.3px;width:60px;text-align:center;top:376.15px;font-size:13.5px;font-weight:normal;color:#333">29</div>
<div class="a" style="left:1822.1499999999999px;top:370.10px;width:4.3px;height:4.3px;border-radius:50%;background:#2f5ff5"></div>
<div class="t" style="left:1835.6px;width:60px;text-align:center;top:376.15px;font-size:13.5px;font-weight:normal;color:#333">30</div>
<div class="t" style="left:1876.8px;width:60px;text-align:center;top:376.15px;font-size:13.5px;font-weight:normal;color:#333">1</div>
<div class="t" style="left:1629.4px;width:60px;text-align:center;top:408.75px;font-size:13.5px;font-weight:normal;color:#333">2</div>
<div class="a" style="left:1657.25px;top:402.70px;width:4.3px;height:4.3px;border-radius:50%;background:#2f5ff5"></div>
<div class="t" style="left:1670.6px;width:60px;text-align:center;top:408.75px;font-size:13.5px;font-weight:normal;color:#333">3</div>
<div class="a" style="left:1698.4499999999998px;top:402.70px;width:4.3px;height:4.3px;border-radius:50%;background:#2f5ff5"></div>
<div class="t" style="left:1711.9px;width:60px;text-align:center;top:408.75px;font-size:13.5px;font-weight:normal;color:#333">4</div>
<div class="t" style="left:1753.1px;width:60px;text-align:center;top:408.75px;font-size:13.5px;font-weight:normal;color:#333">5</div>
<div class="a" style="left:1780.9499999999998px;top:402.70px;width:4.3px;height:4.3px;border-radius:50%;background:#2f5ff5"></div>
<div class="t" style="left:1794.3px;width:60px;text-align:center;top:408.75px;font-size:13.5px;font-weight:normal;color:#333">6</div>
<div class="a" style="left:1822.1499999999999px;top:402.70px;width:4.3px;height:4.3px;border-radius:50%;background:#2f5ff5"></div>
<div class="t" style="left:1835.6px;width:60px;text-align:center;top:408.75px;font-size:13.5px;font-weight:normal;color:#333">7</div>
<div class="t" style="left:1876.8px;width:60px;text-align:center;top:408.75px;font-size:13.5px;font-weight:normal;color:#333">8</div>
<div class="t" style="left:1629.4px;width:60px;text-align:center;top:441.35px;font-size:13.5px;font-weight:normal;color:#333">9</div>
<div class="a" style="left:1657.25px;top:435.30px;width:4.3px;height:4.3px;border-radius:50%;background:#2f5ff5"></div>
<div class="t" style="left:1670.6px;width:60px;text-align:center;top:441.35px;font-size:13.5px;font-weight:normal;color:#333">10</div>
<div class="a" style="left:1727.8000000000002px;top:433.5px;width:28.1px;height:28.4px;border-radius:4px;background:#3b67f5"></div>
<div class="t" style="left:1711.9px;width:60px;text-align:center;top:441.35px;font-size:13.5px;font-weight:bold;color:#fff">11</div>
<div class="a" style="left:1739.75px;top:435.30px;width:4.3px;height:4.3px;border-radius:50%;background:#fff"></div>
<div class="t" style="left:1753.1px;width:60px;text-align:center;top:441.35px;font-size:13.5px;font-weight:normal;color:#333">12</div>
<div class="a" style="left:1780.9499999999998px;top:435.30px;width:4.3px;height:4.3px;border-radius:50%;background:#2f5ff5"></div>
<div class="t" style="left:1794.3px;width:60px;text-align:center;top:441.35px;font-size:13.5px;font-weight:normal;color:#333">13</div>
<div class="t" style="left:1835.6px;width:60px;text-align:center;top:441.35px;font-size:13.5px;font-weight:normal;color:#333">14</div>
<div class="a" style="left:1863.4499999999998px;top:435.30px;width:4.3px;height:4.3px;border-radius:50%;background:#2f5ff5"></div>
<div class="t" style="left:1876.8px;width:60px;text-align:center;top:441.35px;font-size:13.5px;font-weight:normal;color:#333">15</div>
<div class="t" style="left:1629.4px;width:60px;text-align:center;top:473.95px;font-size:13.5px;font-weight:normal;color:#333">16</div>
<div class="a" style="left:1657.25px;top:467.90px;width:4.3px;height:4.3px;border-radius:50%;background:#2f5ff5"></div>
<div class="t" style="left:1670.6px;width:60px;text-align:center;top:473.95px;font-size:13.5px;font-weight:normal;color:#333">17</div>
<div class="t" style="left:1711.9px;width:60px;text-align:center;top:473.95px;font-size:13.5px;font-weight:normal;color:#333">18</div>
<div class="a" style="left:1739.75px;top:467.90px;width:4.3px;height:4.3px;border-radius:50%;background:#2f5ff5"></div>
<div class="t" style="left:1753.1px;width:60px;text-align:center;top:473.95px;font-size:13.5px;font-weight:normal;color:#333">19</div>
<div class="a" style="left:1780.9499999999998px;top:467.90px;width:4.3px;height:4.3px;border-radius:50%;background:#2f5ff5"></div>
<div class="t" style="left:1794.3px;width:60px;text-align:center;top:473.95px;font-size:13.5px;font-weight:normal;color:#333">20</div>
<div class="a" style="left:1822.1499999999999px;top:467.90px;width:4.3px;height:4.3px;border-radius:50%;background:#2f5ff5"></div>
<div class="t" style="left:1835.6px;width:60px;text-align:center;top:473.95px;font-size:13.5px;font-weight:normal;color:#333">21</div>
<div class="t" style="left:1876.8px;width:60px;text-align:center;top:473.95px;font-size:13.5px;font-weight:normal;color:#333">22</div>
<div class="t" style="left:1629.4px;width:60px;text-align:center;top:506.55px;font-size:13.5px;font-weight:normal;color:#333">23</div>
<div class="a" style="left:1657.25px;top:500.50px;width:4.3px;height:4.3px;border-radius:50%;background:#2f5ff5"></div>
<div class="t" style="left:1670.6px;width:60px;text-align:center;top:506.55px;font-size:13.5px;font-weight:normal;color:#333">24</div>
<div class="a" style="left:1698.4499999999998px;top:500.50px;width:4.3px;height:4.3px;border-radius:50%;background:#2f5ff5"></div>
<div class="t" style="left:1711.9px;width:60px;text-align:center;top:506.55px;font-size:13.5px;font-weight:normal;color:#333">25</div>
<div class="a" style="left:1739.75px;top:500.50px;width:4.3px;height:4.3px;border-radius:50%;background:#2f5ff5"></div>
<div class="t" style="left:1753.1px;width:60px;text-align:center;top:506.55px;font-size:13.5px;font-weight:normal;color:#333">26</div>
<div class="a" style="left:1780.9499999999998px;top:500.50px;width:4.3px;height:4.3px;border-radius:50%;background:#2f5ff5"></div>
<div class="t" style="left:1794.3px;width:60px;text-align:center;top:506.55px;font-size:13.5px;font-weight:normal;color:#333">27</div>
<div class="t" style="left:1835.6px;width:60px;text-align:center;top:506.55px;font-size:13.5px;font-weight:normal;color:#a8a8a8">28</div>
<div class="t" style="left:1876.8px;width:60px;text-align:center;top:506.55px;font-size:13.5px;font-weight:normal;color:#a8a8a8">29</div>
<div class="t" style="left:1629.4px;width:60px;text-align:center;top:539.15px;font-size:13.5px;font-weight:normal;color:#a8a8a8">30</div>
<div class="t" style="left:1670.6px;width:60px;text-align:center;top:539.15px;font-size:13.5px;font-weight:normal;color:#a8a8a8">31</div>
<div class="t" style="left:1711.9px;width:60px;text-align:center;top:539.15px;font-size:13.5px;font-weight:normal;color:#a8a8a8">1</div>
<div class="t" style="left:1753.1px;width:60px;text-align:center;top:539.15px;font-size:13.5px;font-weight:normal;color:#a8a8a8">2</div>
<div class="t" style="left:1794.3px;width:60px;text-align:center;top:539.15px;font-size:13.5px;font-weight:normal;color:#a8a8a8">3</div>
<div class="t" style="left:1835.6px;width:60px;text-align:center;top:539.15px;font-size:13.5px;font-weight:normal;color:#a8a8a8">4</div>
<div class="t" style="left:1876.8px;width:60px;text-align:center;top:539.15px;font-size:13.5px;font-weight:normal;color:#a8a8a8">5</div>
<div class="a" style="left:1651px;top:572.4px;width:3.2px;height:15.7px;border-radius:1.5px;background:#f0a21e"></div>
<div class="t" style="left:1659.7px;top:575.5px;font-size:12px;color:#333">季度总结会</div>
<div class="t" style="left:1813px;width:100px;text-align:right;top:575.3px;font-size:12.5px;color:#6a6a6a">9:30–11:00</div>
<div class="a" style="left:1651px;top:602.4px;width:3.2px;height:15.7px;border-radius:1.5px;background:#3b67f5"></div>
<div class="t" style="left:1659.7px;top:605.5px;font-size:12px;color:#333">新季度学习计划讨论</div>
<div class="t" style="left:1814px;width:100px;text-align:right;top:605.3px;font-size:12.5px;color:#6a6a6a">14:30–16:00</div>

</body>
</html>
